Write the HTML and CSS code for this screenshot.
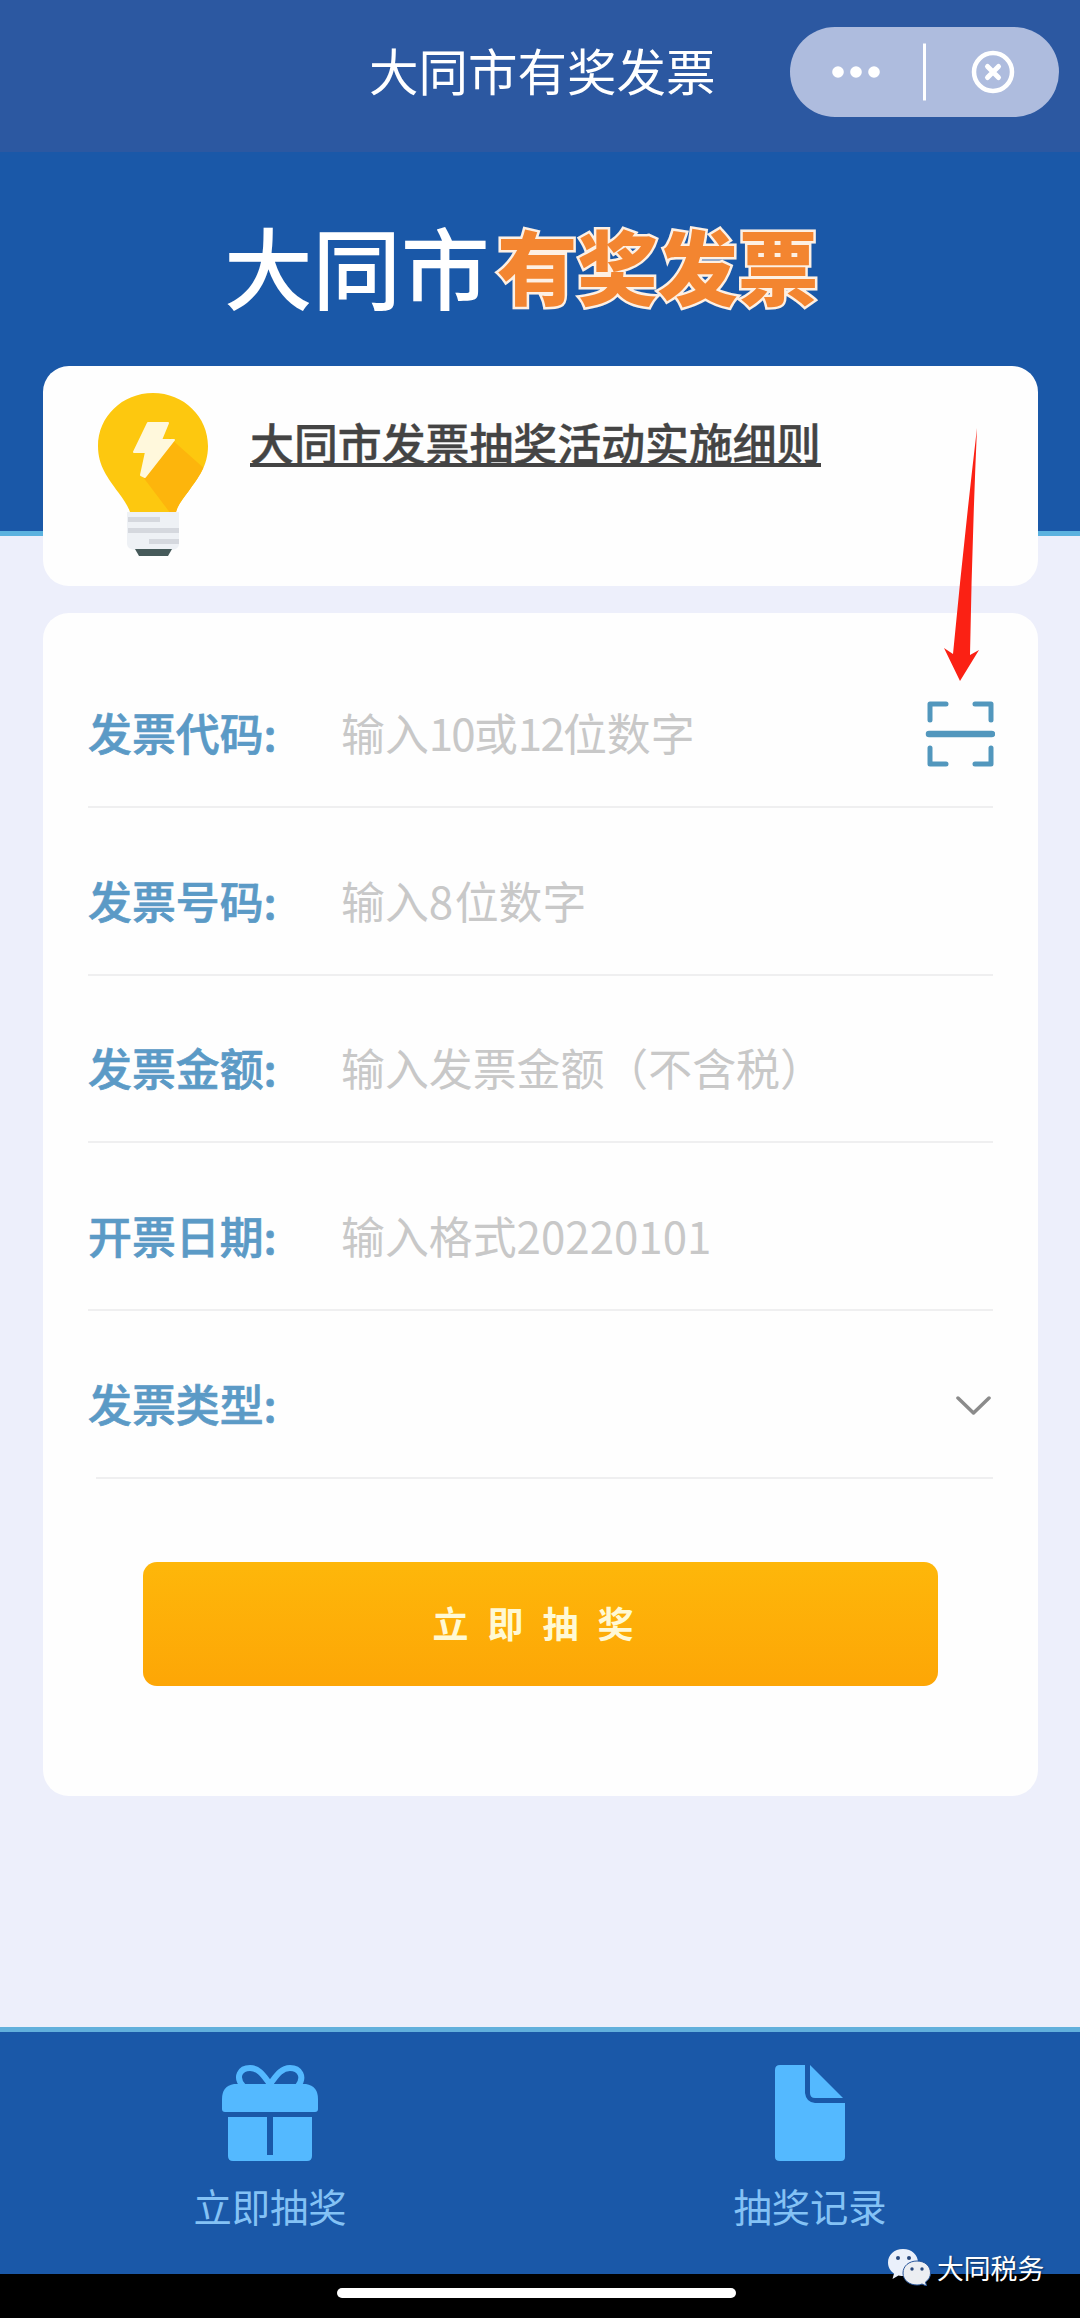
FILE: index.html
```html
<!DOCTYPE html>
<html lang="zh-CN">
<head>
<meta charset="utf-8">
<title>大同市有奖发票</title>
<link rel="stylesheet" href="styles.css">
</head>
<body>
<div class="page">
  <header class="nav">
    <h1 class="nav-title">大同市有奖发票</h1>
    <div class="capsule">
      <svg width="269" height="90" viewBox="0 0 269 90">
        <g fill="#fff"><circle cx="48" cy="45" r="5.8"/><circle cx="66" cy="45" r="5.8"/><circle cx="84" cy="45" r="5.8"/></g>
        <path d="M134.500 16.500v57" stroke="#fff" stroke-width="3"/>
        <circle cx="203" cy="45" r="19" fill="none" stroke="#fff" stroke-width="4.500"/>
        <path d="M197.500 39.500l11 11M208.500 39.500l-11 11" stroke="#fff" stroke-width="5" stroke-linecap="round"/>
      </svg>
    </div>
  </header>

  <section class="hero">
    <div class="hero-title"><span class="city">大同市</span><span class="lottery">有奖发票</span></div>
  </section>

  <main class="content">
    <section class="card rules">
      <svg class="bulb" width="110" height="164" viewBox="0 0 110 164">
        <defs><clipPath id="glass"><path d="M55 0C24 0 0 24 0 53c0 20 10 32 20 46 6 8 10 14 12 20h46c2-7 6-12 12-20 10-14 20-26 20-46C110 24 86 0 55 0z"/></clipPath></defs>
        <g clip-path="url(#glass)">
          <path d="M0 0h110v120H0z" fill="#fdc80f"/>
          <path d="M72 45l45 40v40H76L45 84z" fill="#fdb50c"/>
        </g>
        <path d="M50 30h20l-7 17h13l-29 37-4-2 5-23H36z" fill="#fff8dc" stroke="#fff8dc" stroke-width="2" stroke-linejoin="round"/>
        <path d="M29 119h52v32q0 5-7 6H37q-8-1-8-6z" fill="#eef1f5"/>
        <path d="M30 124h32v5H30zM30 135h51v5H30zM51 146h30v5H51z" fill="#d5d8de"/>
        <path d="M37 156h37l-4 7H41z" fill="#465a5a"/>
      </svg>
      <a class="rules-link">大同市发票抽奖活动实施细则</a>
    </section>

    <form class="card form">
      <div class="row">
        <label>发票代码:</label>
        <span class="hint">输入<span class="pair">10</span>或<span class="pair">12</span>位数字</span>
        <svg class="scan" width="70" height="70" viewBox="0 0 70 70" fill="none" stroke="#5297bd" stroke-width="5" stroke-linecap="round" stroke-linejoin="round">
          <path d="M5 21V5h16M50 5h16v16M5 49v16h16M50 65h16V49"/>
          <path d="M4 35h63" stroke-width="6.500"/>
        </svg>
      </div>
      <div class="row">
        <label>发票号码:</label>
        <span class="hint">输入<span class="single">8</span>位数字</span>
      </div>
      <div class="row">
        <label>发票金额:</label>
        <span class="hint">输入发票金额（不含税）</span>
      </div>
      <div class="row">
        <label>开票日期:</label>
        <span class="hint">输入格式20220101</span>
      </div>
      <div class="row select">
        <label>发票类型:</label>
        <svg class="chevron" width="36" height="24" viewBox="0 0 36 24" fill="none" stroke="#8b8b8b" stroke-width="3.500" stroke-linecap="round" stroke-linejoin="round"><path d="M3 4l15.500 15L34 4"/></svg>
      </div>
      <button class="submit" type="button">立即抽奖</button>
    </form>
  </main>

  <nav class="tabs">
    <a class="tab">
      <svg width="96" height="98" viewBox="0 0 96 98">
        <g fill="none" stroke="#54b9ff" stroke-width="6"><path d="M21 22C13 13 18 4 28 4C38 4 43 14 48 20C53 14 58 4 68 4C78 4 83 13 76 22"/></g>
        <path d="M12 20h72q12 2 12 15v10q0 3-3 3H3q-3 0-3-3V35Q0 22 12 20z" fill="#54b9ff"/>
        <path d="M6 53h39v38h6V53h39v39q0 5-5 5H11q-5 0-5-5z" fill="#54b9ff"/>
      </svg>
      <span>立即抽奖</span>
    </a>
    <a class="tab">
      <svg width="70" height="98" viewBox="0 0 70 98" fill="#54b9ff">
        <path d="M5 1h25v28q1 9 10 10h30v54q0 4-4 4H5q-5 0-5-4V6q0-5 5-5z"/>
        <path d="M35 1l33 33H40q-5 0-5-5z"/>
      </svg>
      <span>抽奖记录</span>
    </a>
  </nav>
  <footer class="home"><div class="home-bar"></div></footer>

  <svg class="arrow" width="40" height="256" viewBox="0 0 40 256"><path d="M35 1Q22 112 11 227L2 221l16 33 19-31-9 5Q30 115 35 1z" fill="#fb2114"/></svg>

  <div class="watermark">
    <svg width="44" height="38" viewBox="0 0 44 38">
      <path d="M16 1C7 1 1 7 1 14.500c0 5 2.500 8.500 6 11L5.500 31l6-3.500c2 .5 3.500.5 5.500.5 8-1 14-6 14-13.500S25 1 16 1z" fill="#eaf0fb"/>
      <path d="M30 13c-8 0-14 5-14 12s6 12 14 12c2 0 3.500-.3 5-1l4.500 2-1-4c3-2 5-5 5-9 0-7-5.500-12-13.500-12z" fill="#eceef2" stroke="#28559a" stroke-width="1"/>
      <g fill="#28487c"><circle cx="11" cy="10" r="2"/><circle cx="22" cy="10" r="2"/><circle cx="25" cy="21" r="1.700"/><circle cx="35" cy="21" r="1.700"/></g>
    </svg>
    <span>大同税务</span>
  </div>
</div>
</body>
</html>
```
FILE: styles.css
```css
* { box-sizing: border-box; }

body {
  margin: 0;
  font-family: "Noto Sans CJK SC", sans-serif;
  background: #edeffb;
}

.page {
  position: relative;
  width: 1080px;
  height: 2318px;
  display: flex;
  flex-direction: column;
  overflow: hidden;
}

svg { display: block; flex: none; }

.nav {
  height: 152px;
  flex: none;
  display: grid;
  grid-template-columns: 1fr 344px 1fr;
  padding: 27px 21px 0 23px;
  background: #2c58a1;
}

.nav-title {
  grid-column: 2;
  margin: 0;
  font-size: 49.5px;
  font-weight: 400;
  line-height: 86px;
  color: #fff;
  white-space: nowrap;
}

.capsule {
  justify-self: end;
  width: 269px;
  height: 90px;
  border-radius: 45px;
  background: #aebcde;
}

.hero {
  height: 384px;
  flex: none;
  padding-top: 56px;
  background: #1a58a8;
  border-bottom: 5px solid #5bb2df;
}

.hero-title {
  display: flex;
  align-items: center;
  height: 112px;
  padding-left: 224px;
  line-height: 112px;
  white-space: nowrap;
}

.city {
  width: 273px;
  font-size: 88.5px;
  font-weight: 500;
  color: #fff;
}

.lottery {
  font-size: 80.3px;
  font-weight: 900;
  color: #f38530;
  -webkit-text-stroke: 5px #fdf0e4;
  paint-order: stroke fill;
}

.content {
  flex: 1;
  display: flex;
  flex-direction: column;
  gap: 27px;
  margin-top: -170px;
  padding: 0 42px 0 43px;
}

.card {
  background: #fefefe;
  border-radius: 26px;
}

.rules {
  height: 220px;
  display: flex;
  align-items: flex-start;
  gap: 42px;
  padding: 27px 0 0 55px;
}

.rules-link {
  height: 48px;
  margin-top: 26px;
  border-bottom: 4px solid #444;
  font-size: 43.9px;
  font-weight: 500;
  line-height: 46px;
  color: #444;
  -webkit-text-stroke: 0.4px;
  white-space: nowrap;
}

.form {
  height: 1183px;
  display: flex;
  flex-direction: column;
  padding: 27px 45px 0 45px;
}

.row {
  height: 167.75px;
  display: flex;
  align-items: center;
  border-bottom: 2px solid #efeff0;
  font-size: 43.9px;
  line-height: 60px;
  white-space: nowrap;
  padding-top: 22px;
}

.row label {
  width: 253px;
  padding-bottom: 4px;
  font-weight: 500;
  color: #5b9ac6;
  -webkit-text-stroke: 0.7px;
}

.select {
  margin-left: 8px;
}

.select label { margin-left: -8px; }

.hint {
  padding-bottom: 4px;
  font-weight: 400;
  color: #c8c8c8;
}

.pair { letter-spacing: -1.8px; }
.single { letter-spacing: 1.5px; }

.scan, .chevron { margin-left: auto; }
.scan { margin-right: -2px; }
.chevron { margin: 3px 2px 0 auto; }

.submit {
  width: 795px;
  height: 124px;
  margin: 83px 0 0 55px;
  padding: 0 0 4px 4px;
  border: 0;
  border-radius: 14px;
  background: linear-gradient(#feb70a, #fda606);
  color: #fff9d4;
  font: 700 36px/120px "Noto Sans CJK SC", sans-serif;
  letter-spacing: 19px;
}

.tabs {
  height: 247px;
  flex: none;
  display: grid;
  grid-template-columns: 1fr 1fr;
  background: #1a58a8;
  border-top: 5px solid #62b0dc;
}

.tab {
  display: flex;
  flex-direction: column;
  align-items: center;
  gap: 14px;
  padding-top: 32px;
  font-size: 38.3px;
  font-weight: 400;
  line-height: 60px;
  color: #84c2f5;
}

.home {
  height: 44px;
  flex: none;
  padding: 14px 0 0 337px;
  background: #000;
}

.home-bar {
  width: 399px;
  height: 10px;
  border-radius: 5px;
  background: #fff;
}

.arrow {
  position: absolute;
  left: 942px;
  top: 427px;
}

.watermark {
  position: absolute;
  left: 887px;
  top: 2248px;
  display: flex;
  gap: 6px;
  font-size: 26.8px;
  line-height: 40px;
  color: #fff;
  text-shadow: 1px 1px 2px #0008;
}
```
